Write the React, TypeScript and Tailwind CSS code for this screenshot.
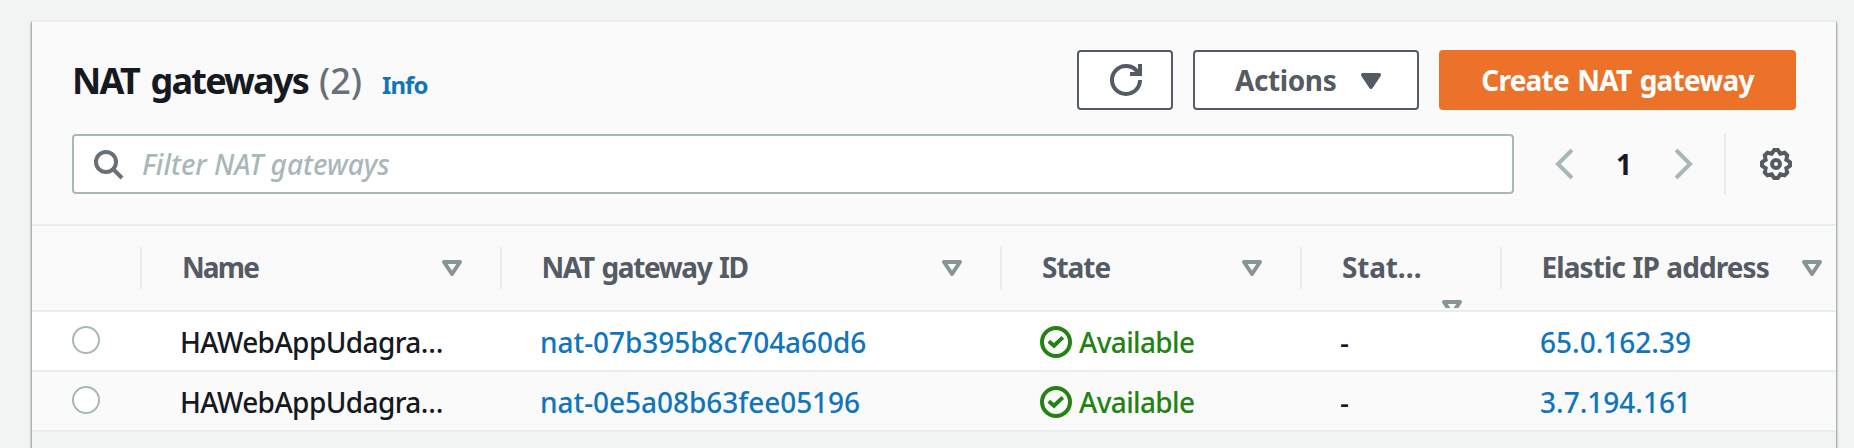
import type { ReactNode } from "react";

function SearchIcon() {
  return (
    <svg className="h-8 w-8 shrink-0" viewBox="0 0 16 16" fill="none" stroke="#687078" strokeWidth="2">
      <circle cx="7" cy="7" r="5" />
      <path d="m15 15-4.5-4.5" />
    </svg>
  );
}

function RefreshIcon() {
  return (
    <svg className="h-8 w-8" viewBox="0 0 16 16" fill="none" stroke="#545b64" strokeWidth="2">
      <path d="M10 5h5V0" />
      <path d="M15 8a6.957 6.957 0 0 1-7 7 6.957 6.957 0 0 1-7-7 6.957 6.957 0 0 1 7-7 6.87 6.87 0 0 1 6.3 4" />
    </svg>
  );
}

function ChevronIcon({ flip = false }: { flip?: boolean }) {
  return (
    <svg className={flip ? "h-8 w-8 -scale-x-100" : "h-8 w-8"} viewBox="0 0 16 16" fill="none" stroke="#aab7b8" strokeWidth="2">
      <path d="M12 1 5 8l7 7" />
    </svg>
  );
}

function GearIcon() {
  return (
    <svg className="h-8 w-8" viewBox="0 0 16 16" fill="none" stroke="#545b64" strokeWidth="2" strokeLinejoin="miter">
      <path d="M7.100 1h1.800l1.240 1.830 2.150-.440 1.320 1.320-.440 2.150L15 7.100v1.800l-1.830 1.240.440 2.150-1.320 1.320-2.150-.440L8.900 15H7.100l-1.240-1.830-2.150.440-1.320-1.320.440-2.150L1 8.900V7.100l1.830-1.240-.440-2.150 1.320-1.320 2.150.440z" />
      <circle cx="8" cy="8" r="2" />
    </svg>
  );
}

function CaretFilled() {
  return (
    <svg className="h-8 w-8" viewBox="0 0 16 16" fill="#545b64" stroke="#545b64" strokeWidth="2" strokeLinejoin="round">
      <path d="M4 5h8l-4 6z" />
    </svg>
  );
}

function SortIcon() {
  return (
    <svg className="h-8 w-8 shrink-0" viewBox="0 0 16 16" fill="none" stroke="#879596" strokeWidth="2" strokeLinejoin="round">
      <path d="M4 5h8l-4 6z" />
    </svg>
  );
}

function CheckCircle() {
  return (
    <svg className="h-8 w-8 shrink-0" viewBox="0 0 16 16" fill="none" stroke="#238312" strokeWidth="2">
      <circle cx="8" cy="8" r="7" />
      <path d="m4.400 7.600 2.600 2.300 4.400-4.200" />
    </svg>
  );
}

function HeaderCell({ children, wrapSort = false, className }: { children: ReactNode; wrapSort?: boolean; className: string }) {
  return (
    <div className={`flex h-[84px] justify-between overflow-hidden ${className}`}>
      <div className={wrapSort ? "flex h-[82px] min-w-0 flex-1 flex-col overflow-hidden pt-[21px]" : "flex min-w-0 flex-1 justify-between pt-[21px]"}>
        <div className="h-10 leading-10 font-bold whitespace-nowrap text-[#545b64]">{children}</div>
        <div className={wrapSort ? "mt-[5px] flex h-8 justify-end" : "mt-[5px] flex h-8"}>
          <SortIcon />
        </div>
      </div>
    </div>
  );
}

function ColumnDivider() {
  return <div className="mt-[21px] h-[42px] w-0.5 shrink-0 bg-[#eaeded]" />;
}

const gateways = [
  { id: "nat-07b395b8c704a60d6", ip: "65.0.162.39", bg: "bg-white" },
  { id: "nat-0e5a08b63fee05196", ip: "3.7.194.161", bg: "bg-[#fafafa]" },
];

export default function App() {
  return (
    <div className="h-[448px] overflow-hidden bg-[#f2f3f3] pt-5 pr-[18px] pl-8 font-['Noto_Sans',sans-serif] text-[28px] font-medium text-[#16191f]">
      <div className="h-[500px] border-t-2 border-[#eaeded] bg-[#f2f3f3] shadow-[0_2px_2px_0_rgba(0,28,36,0.3),1px_2px_2px_0_rgba(0,28,36,0.3),-1px_2px_2px_0_rgba(0,28,36,0.3)]">
        <div className="h-[204px] border-b-2 border-[#eaeded] bg-[#fafafa] pt-7 pr-10 pl-10">
          <div className="flex h-[60px] items-center">
            <div className="flex flex-1 items-baseline pt-0.5">
              <h1 className="text-[36px] leading-[60px] whitespace-nowrap">
                <span className="font-bold tracking-[-1.800px] [word-spacing:4px]">NAT gateways</span>
                <span className="ml-[11px] text-[#687078]">(2)</span>
              </h1>
              <a className="ml-[20px] text-2xl font-bold tracking-[-0.900px] text-[#1175bb]">Info</a>
            </div>
            <div className="flex gap-5">
              <button className="flex h-[60px] w-24 items-center justify-center rounded-sm border-2 border-[#545b64] bg-white pl-0.5">
                <RefreshIcon />
              </button>
              <button className="flex h-[60px] w-[226px] items-center rounded-sm border-2 border-[#545b64] bg-white pl-10 font-bold tracking-[-0.400px] text-[#545b64]">
                <span className="w-[120px] text-left">Actions</span>
                <span className="pt-0.5">
                  <CaretFilled />
                </span>
              </button>
              <button className="h-[60px] w-[357px] rounded-sm bg-[#eb7228] font-bold tracking-[-0.800px] text-white [word-spacing:2px]">Create NAT gateway</button>
            </div>
          </div>
          <div className="mt-6 flex h-[60px] items-center">
            <div className="flex h-[60px] w-[1442px] items-center rounded-sm border-2 border-[#aab7b8] bg-white pl-[18px]">
              <SearchIcon />
              <span className="ml-[18px] text-[#aab7b8] italic">Filter NAT gateways</span>
            </div>
            <div className="ml-[34px] flex items-center">
              <ChevronIcon />
              <span className="w-[88px] text-center font-bold">1</span>
              <ChevronIcon flip />
            </div>
            <div className="ml-[24px] h-[60px] w-0.5 bg-[#eaeded]" />
            <div className="ml-[34px]">
              <GearIcon />
            </div>
          </div>
        </div>

        <div className="flex h-[86px] border-b-2 border-[#eaeded] bg-[#fafafa]">
          <div className="w-[108px]" />
          <ColumnDivider />
          <HeaderCell className="w-[358px] pr-[32px] pl-[40px] tracking-[-1.900px]">Name</HeaderCell>
          <ColumnDivider />
          <HeaderCell className="w-[498px] pr-[32px] pl-[39.500px] tracking-[-1.400px] [word-spacing:2px]">NAT gateway ID</HeaderCell>
          <ColumnDivider />
          <HeaderCell className="w-[298px] pr-[32px] pl-[40px] tracking-[-1px]">State</HeaderCell>
          <ColumnDivider />
          <HeaderCell className="w-[198px] pr-[32px] pl-[40px] tracking-[-0.200px]" wrapSort>Stat…</HeaderCell>
          <ColumnDivider />
          <HeaderCell className="w-[334px] pr-[8px] pl-[39.500px] tracking-[-0.900px] [word-spacing:1px]">Elastic IP address</HeaderCell>
        </div>

        {gateways.map((g) => (
          <div key={g.id} className={`flex h-[60px] items-center border-b-2 border-[#eaeded] pt-px ${g.bg}`}>
            <div className="w-[148px] pl-10">
              <div className="mb-[3px] h-7 w-7 rounded-full border-2 border-[#aab7b8] bg-white" />
            </div>
            <div className="w-[360px] tracking-[-0.600px]">HAWebAppUdagra…</div>
            <div className="w-[500px] tracking-[-0.050px] text-[#1175bb]">{g.id}</div>
            <div className="flex w-[299px] items-center gap-[7px] tracking-[-0.650px] text-[#238312]">
              <CheckCircle />
              <span>Available</span>
            </div>
            <div className="w-[201px] pl-px">-</div>
            <div className="text-[#1175bb]">{g.ip}</div>
          </div>
        ))}
      </div>
    </div>
  );
}
